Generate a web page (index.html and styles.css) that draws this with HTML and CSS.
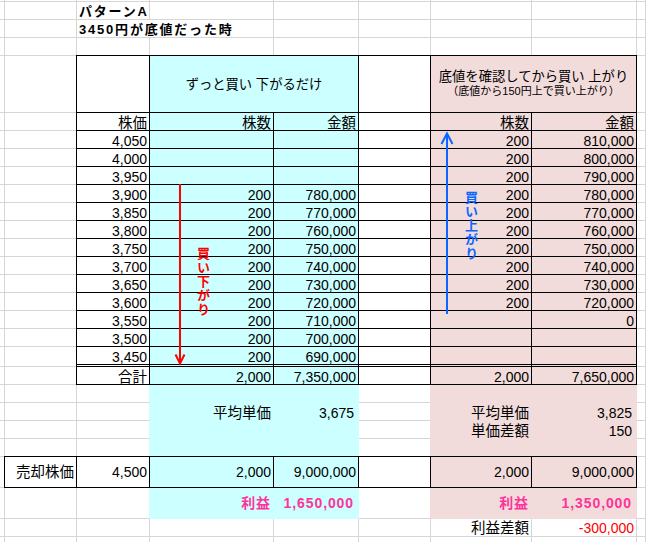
FILE: index.html
```html
<!DOCTYPE html>
<html lang="ja">
<head>
<meta charset="utf-8">
<title>パターンA</title>
<link rel="stylesheet" href="styles.css">
</head>
<body>
<div class="page">
  <div class="sheet">
    <!-- row 0 -->
    <div class="c"></div><div class="c"></div><div class="c"></div><div class="c"></div><div class="c"></div><div class="c"></div><div class="c"></div><div class="c"></div><div class="c"></div>
    <!-- row 1 -->
    <div class="c"></div><div class="c"></div><div class="c l t">パターンA</div><div class="c"></div><div class="c"></div><div class="c"></div><div class="c"></div><div class="c"></div><div class="c"></div>
    <!-- row 2 -->
    <div class="c"></div><div class="c"></div><div class="c l t s2">3450円が底値だった時</div><div class="c"></div><div class="c"></div><div class="c"></div><div class="c"></div><div class="c"></div>
    <!-- row 3 -->
    <div class="c"></div><div class="c"></div><div class="c"></div><div class="c"></div><div class="c"></div><div class="c"></div><div class="c"></div><div class="c"></div><div class="c"></div>
    <!-- header -->
    <div class="c"></div><div class="c"></div><div class="c b"></div>
    <div class="c b cy s2 ctr h1">ずっと買い 下がるだけ</div>
    <div class="c b"></div>
    <div class="c b pk s2 ctr"><div class="hd"><div class="h1">底値を確認してから買い 上がり</div><div class="h2">（底値から150円上で買い上がり）</div></div></div>
    <div class="c"></div>
    <!-- column titles -->
    <div class="c"></div><div class="c"></div><div class="c b jp">株価</div><div class="c b cy jp">株数</div><div class="c b cy jp">金額</div><div class="c b"></div><div class="c b pk jp">株数</div><div class="c b pk jp">金額</div><div class="c"></div>
    <!-- data -->
    <div class="c"></div><div class="c"></div><div class="c b">4,050</div><div class="c b cy"></div><div class="c b cy"></div><div class="c b"></div><div class="c b pk">200</div><div class="c b pk">810,000</div><div class="c"></div>
    <div class="c"></div><div class="c"></div><div class="c b">4,000</div><div class="c b cy"></div><div class="c b cy"></div><div class="c b"></div><div class="c b pk">200</div><div class="c b pk">800,000</div><div class="c"></div>
    <div class="c"></div><div class="c"></div><div class="c b">3,950</div><div class="c b cy"></div><div class="c b cy"></div><div class="c b"></div><div class="c b pk">200</div><div class="c b pk">790,000</div><div class="c"></div>
    <div class="c"></div><div class="c"></div><div class="c b">3,900</div><div class="c b cy">200</div><div class="c b cy">780,000</div><div class="c b"></div><div class="c b pk">200</div><div class="c b pk">780,000</div><div class="c"></div>
    <div class="c"></div><div class="c"></div><div class="c b">3,850</div><div class="c b cy">200</div><div class="c b cy">770,000</div><div class="c b"></div><div class="c b pk">200</div><div class="c b pk">770,000</div><div class="c"></div>
    <div class="c"></div><div class="c"></div><div class="c b">3,800</div><div class="c b cy">200</div><div class="c b cy">760,000</div><div class="c b"></div><div class="c b pk">200</div><div class="c b pk">760,000</div><div class="c"></div>
    <div class="c"></div><div class="c"></div><div class="c b">3,750</div><div class="c b cy">200</div><div class="c b cy">750,000</div><div class="c b"></div><div class="c b pk">200</div><div class="c b pk">750,000</div><div class="c"></div>
    <div class="c"></div><div class="c"></div><div class="c b">3,700</div><div class="c b cy">200</div><div class="c b cy">740,000</div><div class="c b"></div><div class="c b pk">200</div><div class="c b pk">740,000</div><div class="c"></div>
    <div class="c"></div><div class="c"></div><div class="c b">3,650</div><div class="c b cy">200</div><div class="c b cy">730,000</div><div class="c b"></div><div class="c b pk">200</div><div class="c b pk">730,000</div><div class="c"></div>
    <div class="c"></div><div class="c"></div><div class="c b">3,600</div><div class="c b cy">200</div><div class="c b cy">720,000</div><div class="c b"></div><div class="c b pk">200</div><div class="c b pk">720,000</div><div class="c"></div>
    <div class="c"></div><div class="c"></div><div class="c b">3,550</div><div class="c b cy">200</div><div class="c b cy">710,000</div><div class="c b"></div><div class="c b pk"></div><div class="c b pk">0</div><div class="c"></div>
    <div class="c"></div><div class="c"></div><div class="c b">3,500</div><div class="c b cy">200</div><div class="c b cy">700,000</div><div class="c b"></div><div class="c b pk"></div><div class="c b pk"></div><div class="c"></div>
    <div class="c dl"></div><div class="c dl"></div><div class="c b dbl">3,450</div><div class="c b cy dbl">200</div><div class="c b cy dbl">690,000</div><div class="c b dbl"></div><div class="c b pk dbl"></div><div class="c b pk dbl"></div><div class="c dl"></div>
    <!-- total -->
    <div class="c"></div><div class="c"></div><div class="c b jp">合計</div><div class="c b cy">2,000</div><div class="c b cy">7,350,000</div><div class="c b"></div><div class="c b pk">2,000</div><div class="c b pk">7,650,000</div><div class="c"></div>
    <!-- summary rows -->
    <div class="c"></div><div class="c"></div><div class="c rc"></div><div class="c cy nb"></div><div class="c cy nb"></div><div class="c rp"></div><div class="c pk nb"></div><div class="c pk nb"></div><div class="c"></div>
    <div class="c"></div><div class="c"></div><div class="c rc"></div><div class="c cy nb jp">平均単価</div><div class="c cy nb pr">3,675</div><div class="c rp"></div><div class="c pk nb jp">平均単価</div><div class="c pk nb pr">3,825</div><div class="c"></div>
    <div class="c"></div><div class="c"></div><div class="c rc"></div><div class="c cy nb"></div><div class="c cy nb"></div><div class="c rp"></div><div class="c pk nb jp">単価差額</div><div class="c pk nb pr">150</div><div class="c"></div>
    <div class="c"></div><div class="c"></div><div class="c rc"></div><div class="c cy nb"></div><div class="c cy nb"></div><div class="c rp"></div><div class="c pk nb"></div><div class="c pk nb"></div><div class="c"></div>
    <!-- sale row -->
    <div class="c"></div><div class="c b jp mid">売却株価</div><div class="c b mid">4,500</div><div class="c b cy mid">2,000</div><div class="c b cy mid">9,000,000</div><div class="c b"></div><div class="c b pk mid">2,000</div><div class="c b pk mid">9,000,000</div><div class="c"></div>
    <!-- profit row -->
    <div class="c"></div><div class="c"></div><div class="c rc"></div><div class="c cy nb mid mg">利益</div><div class="c cy nb mid mg pr">1,650,000</div><div class="c rp"></div><div class="c pk nb mid mg">利益</div><div class="c pk nb mid mg pr">1,350,000</div><div class="c"></div>
    <!-- profit diff row -->
    <div class="c"></div><div class="c"></div><div class="c"></div><div class="c"></div><div class="c"></div><div class="c"></div><div class="c jp mid">利益差額</div><div class="c mid neg">-300,000</div><div class="c"></div>
    <!-- last row -->
    <div class="c"></div><div class="c"></div><div class="c"></div><div class="c"></div><div class="c"></div><div class="c"></div><div class="c"></div><div class="c"></div><div class="c"></div>
  </div>

  <svg class="arrows" width="646" height="542" viewBox="0 0 646 542" aria-hidden="true">
    <g fill="none" stroke="#ff0000" stroke-width="2">
      <line x1="180" y1="184" x2="180" y2="362"/>
      <polyline points="175.5,354.5 180,363.5 184.5,354.5"/>
    </g>
    <g fill="none" stroke="#0a66ff" stroke-width="2">
      <line x1="447" y1="135" x2="447" y2="314"/>
      <polyline points="441.5,144 447,133.5 452.5,144"/>
    </g>
  </svg>
  <div class="vt red">買い下がり</div>
  <div class="vt blue">買い上がり</div>
</div>
</body>
</html>
```

FILE: styles.css
```css
html, body {
  margin: 0;
  padding: 0;
  background: #ffffff;
}

.page {
  position: relative;
  width: 646px;
  height: 542px;
  overflow: hidden;
  font-family: "Liberation Sans", "Noto Sans CJK JP", sans-serif;
  font-size: 14px;
  color: #000;
}

.sheet {
  display: grid;
  grid-template-columns: 5px 72px 73px 124px 85px 72px 101px 105px 9px;
  grid-template-rows: 2px 18px 18px 18px 57px 18px repeat(12, 18px) 20px 18px 18px 18px 18px 18px 31px 31px 18px 18px;
}

.c {
  box-sizing: border-box;
  border-right: 1px solid #d6d6d6;
  border-bottom: 1px solid #d6d6d6;
  display: flex;
  align-items: flex-end;
  justify-content: flex-end;
  padding: 0 2px;
  line-height: 14px;
  white-space: nowrap;
  min-width: 0;
}

.l { justify-content: flex-start; }
.s2 { grid-column: span 2; }
.mid { align-items: center; }
.ctr { justify-content: center; align-items: center; text-align: center; }
.pr { padding-right: 4px; }

.t {
  font-weight: bold;
  font-size: 13px;
  letter-spacing: 1.8px;
  padding-left: 2px;
}

.jp { font-size: 14.5px; }

.b {
  border-right-color: #000;
  border-bottom-color: #000;
  box-shadow: -1px -1px 0 #000, 0 -1px 0 #000, -1px 0 0 #000;
}

.dbl { border-bottom: 3px double #000; }

.cy { background: #ccffff; }
.pk { background: #f2dcdb; }
.nb { border-color: transparent; }
.rc { border-right-color: #ccffff; }
.rp { border-right-color: #f2dcdb; }

.h1 { font-size: 13.3px; line-height: 15px; }
.h2 { font-size: 11px; line-height: 15px; }
.hd { display: flex; flex-direction: column; align-items: center; }

.mg {
  color: #ff3399;
  font-weight: bold;
  letter-spacing: 0.9px;
}

.neg { color: #ff0000; }

.arrows {
  position: absolute;
  left: 0;
  top: 0;
  pointer-events: none;
}

.vt {
  position: absolute;
  writing-mode: vertical-rl;
  font-family: "Noto Sans CJK JP", sans-serif;
  font-weight: bold;
  font-size: 13px;
  line-height: 13px;
  letter-spacing: 1px;
}

.vt.red { left: 197px; top: 247px; color: #ff0000; }
.vt.blue { left: 465px; top: 191px; color: #0a66ff; }
```
